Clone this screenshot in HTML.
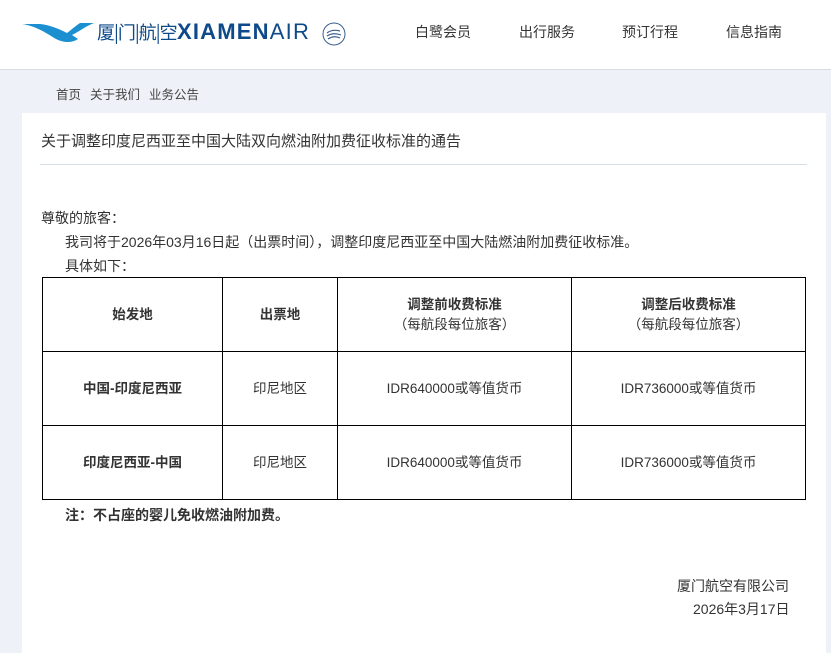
<!DOCTYPE html>
<html><head><meta charset="utf-8"><style>
*{margin:0;padding:0;box-sizing:border-box}
body{width:831px;height:644px;overflow:hidden;background:#eef1f7;font-family:"Liberation Sans","Noto Sans CJK SC",sans-serif;color:#333;font-size:13px;position:relative}
.hd{position:absolute;left:0;top:0;width:831px;height:70px;background:#fff;border-bottom:1px solid #d8dbe2}
.nav{position:absolute;top:22px;font-size:14px;color:#333}
.crumb{position:absolute;top:84px;left:56px;font-size:12.5px;color:#444}
.crumb span{margin-right:9px}
.panel{position:absolute;left:22px;top:113px;width:804px;height:540px;background:#fff}
.t{position:absolute;font-size:14px;color:#333;white-space:nowrap}
table{position:absolute;left:42px;top:277px;border-collapse:collapse;width:764px}
td{border:1px solid #000;height:74px;text-align:center;font-size:13.5px;line-height:20px}
</style></head><body>
<div class="hd">
<svg style="position:absolute;left:22px;top:20px" width="72" height="24" viewBox="0 0 72 24"><path d="M0 4 C14 6 24 13 34 19 C42 23 50 23 56 19 L50 15 C58 11 64 6 72 3 L58 3 C52 7 48 11 45 13 C37 9 28 5 18 4 Z" fill="#1b8fd0"/></svg>
<div style="position:absolute;left:97px;top:20px;font-size:18px;line-height:24px;color:#0e4a8a;font-family:'Noto Sans CJK SC',sans-serif;letter-spacing:-1px">厦|门|航|空</div>
<div style="position:absolute;left:177px;top:19px;font-size:22px;line-height:26px;color:#0e4a8a;font-weight:bold;letter-spacing:1.2px">XIAMEN<span style="font-weight:normal">AIR</span></div>
<svg style="position:absolute;left:318px;top:16px" width="32" height="32" viewBox="0 0 32 32"><circle cx="16" cy="18" r="11" fill="none" stroke="#3a5f8f" stroke-width="1"/><path d="M9 17 Q14 13 22 15 M9 20 Q15 16 23 19 M10 23 Q16 19 22 22" fill="none" stroke="#3a5f8f" stroke-width="1.2"/></svg>
<div class="nav" style="left:415px">白鹭会员</div>
<div class="nav" style="left:519px">出行服务</div>
<div class="nav" style="left:622px">预订行程</div>
<div class="nav" style="left:726px">信息指南</div>
</div>
<div class="crumb"><span>首页</span><span>关于我们</span><span>业务公告</span></div>
<div class="panel"></div>
<div class="t" style="left:41px;top:130px;font-size:15px">关于调整印度尼西亚至中国大陆双向燃油附加费征收标准的通告</div>
<div style="position:absolute;left:40px;top:164px;width:767px;height:1px;background:#d5e0e8"></div>
<div class="t" style="left:41px;top:208px">尊敬的旅客：</div>
<div class="t" style="left:65px;top:232px">我司将于2026年03月16日起（出票时间），调整印度尼西亚至中国大陆燃油附加费征收标准。</div>
<div class="t" style="left:65px;top:256px">具体如下：</div>
<table>
<tr><td style="width:180px;font-weight:bold">始发地</td><td style="width:115px;font-weight:bold">出票地</td><td style="width:234px"><b>调整前收费标准</b><br>（每航段每位旅客）</td><td><b>调整后收费标准</b><br>（每航段每位旅客）</td></tr>
<tr><td style="font-weight:bold">中国-印度尼西亚</td><td>印尼地区</td><td>IDR640000或等值货币</td><td>IDR736000或等值货币</td></tr>
<tr><td style="font-weight:bold">印度尼西亚-中国</td><td>印尼地区</td><td>IDR640000或等值货币</td><td>IDR736000或等值货币</td></tr>
</table>
<div class="t" style="left:65px;top:505px;font-weight:bold">注：不占座的婴儿免收燃油附加费。</div>
<div class="t" style="left:677px;top:576px">厦门航空有限公司</div>
<div class="t" style="left:693px;top:599px">2026年3月17日</div>
</body></html>
